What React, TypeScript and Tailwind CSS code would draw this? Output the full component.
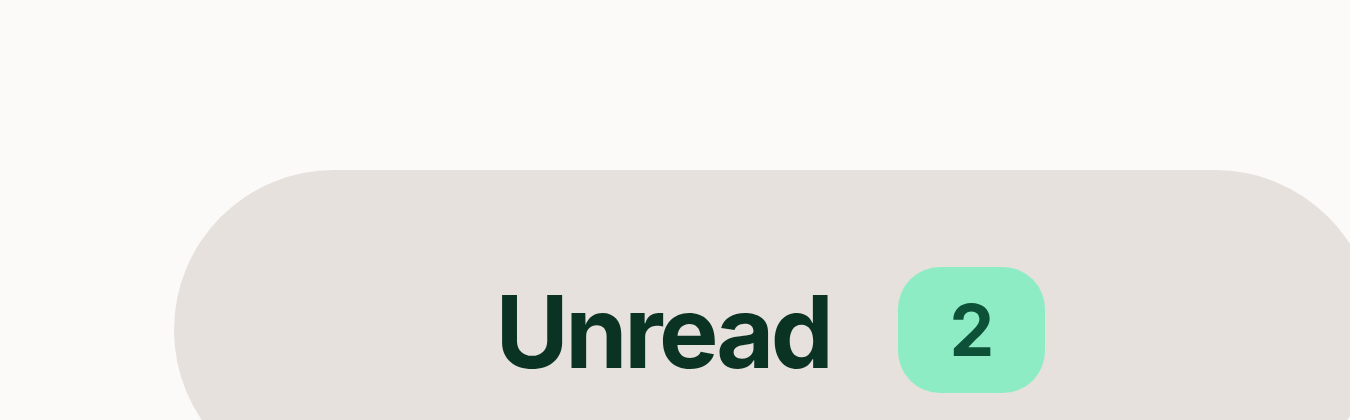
export default function App() {
  return (
    <div className="w-[1350px] h-[420px] overflow-hidden bg-[#fbfaf8] pt-[170px] pl-[174px]" style={{ fontFamily: 'Inter, "Liberation Sans", sans-serif' }}>
      <div className="w-[1201px] h-[320px] shrink-0 rounded-full bg-[#e6e1dc] flex items-center justify-center gap-[68px] pr-[8px]">
        <span className="text-[100px] leading-none font-bold tracking-[-0.034em] text-[#0a3324] mt-[4px]">Unread</span>
        <span className="w-[147px] h-[126px] rounded-[42px] bg-[#8eecc5] flex items-center justify-center text-[71px] leading-none font-bold text-[#0c5138]">2</span>
      </div>
    </div>
  );
}
